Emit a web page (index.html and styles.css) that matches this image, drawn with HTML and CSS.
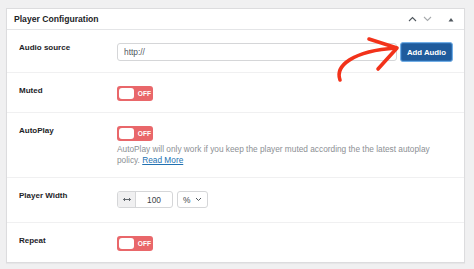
FILE: index.html
```html
<!DOCTYPE html>
<html lang="en">
<head>
    <meta charset="UTF-8">
    <meta name="viewport" content="width=device-width, initial-scale=1.0">
    <title>Player Configuration</title>
    <link rel="stylesheet" href="styles.css">
</head>
<body>
    <div class="panel">
        <!-- Panel header with move / toggle controls -->
        <div class="panel-head">
            <h2>Player Configuration</h2>
            <div class="head-tools">
                <svg width="9" height="6" viewBox="0 0 9 6"><path d="M1 5 L4.5 1.5 L8 5" fill="none" stroke="#50575e" stroke-width="1.1"/></svg>
                <svg width="9" height="6" viewBox="0 0 9 6"><path d="M1 1 L4.5 4.5 L8 1" fill="none" stroke="#a7aaad" stroke-width="1.1"/></svg>
                <svg class="caret" width="6" height="5" viewBox="0 0 6 5"><path d="M0.5 4.5 L3 1 L5.5 4.5 Z" fill="#50575e"/></svg>
            </div>
        </div>

        <div class="row">
            <div class="label">Audio source</div>
            <div class="field field-inline">
                <input type="text" class="text-input" placeholder="http://">
                <button class="btn-primary">Add Audio</button>
            </div>
        </div>

        <div class="row">
            <div class="label">Muted</div>
            <div class="field">
                <span class="switch"><span class="knob"></span><span class="switch-text">OFF</span></span>
            </div>
        </div>

        <div class="row">
            <div class="label">AutoPlay</div>
            <div class="field">
                <span class="switch"><span class="knob"></span><span class="switch-text">OFF</span></span>
                <p class="help">AutoPlay will only work if you keep the player muted according the the latest autoplay policy. <a href="#">Read More</a></p>
            </div>
        </div>

        <div class="row row-tall">
            <div class="label">Player Width</div>
            <div class="field field-inline">
                <div class="num-group">
                    <span class="addon">
                        <svg width="8" height="5" viewBox="0 0 8 5"><path d="M0.5 2.5 H7.5 M0.5 2.5 L2 1 M0.5 2.5 L2 4 M7.5 2.5 L6 1 M7.5 2.5 L6 4" fill="none" stroke="#50575e" stroke-width="0.9"/></svg>
                    </span>
                    <span class="num">100</span>
                </div>
                <div class="unit-select">
                    <span>%</span>
                    <svg width="7" height="5" viewBox="0 0 7 5"><path d="M1 1 L3.5 3.5 L6 1" fill="none" stroke="#50575e" stroke-width="1"/></svg>
                </div>
            </div>
        </div>

        <div class="row">
            <div class="label">Repeat</div>
            <div class="field">
                <span class="switch"><span class="knob"></span><span class="switch-text">OFF</span></span>
            </div>
        </div>
    </div>

    <!-- hand drawn pointer over the button -->
    <svg class="pointer" width="474" height="269" viewBox="0 0 474 269">
        <path d="M340 80 C335 66 352 51 396 48" fill="none" stroke="#f2321a" stroke-width="3.6" stroke-linecap="round"/>
        <path d="M369 39 L397 48 L378 69" fill="none" stroke="#f2321a" stroke-width="3.6" stroke-linecap="round" stroke-linejoin="round"/>
    </svg>
</body>
</html>
```

FILE: styles.css
```css
/* Page */
body {
    margin: 0;
    padding: 8px 9px 7px 6px;
    background-color: #f0f0f1;
    font-family: "Liberation Sans", Arial, sans-serif;
    color: #1d2327;
}

/* Settings panel */
.panel {
    background-color: #fff;
    border: 1px solid #dcdcde;
    box-shadow: 0 1px 1px rgba(0, 0, 0, 0.04);
}

.panel-head {
    display: flex;
    align-items: center;
    justify-content: space-between;
    height: 20px;
    padding: 0 10px 0 7px;
    border-bottom: 1px solid #e4e5e7;
}

.panel-head h2 {
    margin: 0;
    font-size: 8.6px;
    font-weight: bold;
}

.head-tools {
    display: flex;
    align-items: center;
    gap: 6px;
}

.head-tools .caret {
    margin-left: 10px;
}

/* Rows */
.row {
    display: flex;
    padding: 13px 0 11px;
    border-bottom: 1px solid #f0f0f1;
}

.row:last-child {
    border-bottom: none;
}

.row-tall {
    padding-bottom: 14px;
}

.label {
    width: 110px;
    flex-shrink: 0;
    padding-left: 12px;
    box-sizing: border-box;
    font-size: 8px;
    font-weight: bold;
    line-height: 10px;
    color: #1d2327;
}

.field {
    flex: 1;
    padding-right: 11px;
}

.field-inline {
    display: flex;
    align-items: flex-start;
    gap: 3px;
}

/* Text input + button */
.text-input {
    flex: 1;
    height: 18px;
    margin: 0;
    padding: 0 6px;
    border: 1px solid #d5d6d8;
    border-radius: 3px;
    box-sizing: border-box;
    font-family: inherit;
    font-size: 8.4px;
    color: #50575e;
}

.text-input::placeholder {
    color: #50575e;
}

.btn-primary {
    height: 20px;
    margin: -1px 0;
    padding: 0 6px;
    border: 1px solid #72aee6;
    border-radius: 3px;
    box-shadow: 0 0 0 1px #2b6cb0 inset;
    background-color: #1f5b9c;
    color: #fff;
    font-family: inherit;
    font-size: 7.8px;
    font-weight: bold;
}

/* OFF switch */
.switch {
    display: flex;
    align-items: center;
    width: 36px;
    height: 15px;
    padding: 0 2px;
    box-sizing: border-box;
    border-radius: 3px;
    background-color: #e9676a;
}

.knob {
    width: 15px;
    height: 11px;
    border-radius: 3px;
    background-color: #fff;
}

.switch-text {
    margin-left: 4px;
    font-size: 6.6px;
    font-weight: bold;
    color: #fff;
}

.help {
    max-width: 322px;
    margin: 3px 0 0;
    font-size: 8.3px;
    line-height: 11px;
    color: #8c8f94;
}

.help a {
    color: #2271b1;
}

/* Width input group */
.num-group {
    display: flex;
    width: 56px;
    height: 17px;
    border: 1px solid #d5d6d8;
    border-radius: 3px;
    box-sizing: border-box;
    overflow: hidden;
}

.addon {
    display: flex;
    align-items: center;
    justify-content: center;
    width: 17px;
    background-color: #f0f0f1;
    border-right: 1px solid #d5d6d8;
}

.num {
    flex: 1;
    display: flex;
    align-items: center;
    justify-content: center;
    font-size: 8.4px;
    color: #3c434a;
}

.unit-select {
    display: flex;
    align-items: center;
    gap: 5px;
    height: 17px;
    padding: 0 5px;
    margin-left: 1px;
    border: 1px solid #d5d6d8;
    border-radius: 3px;
    box-sizing: border-box;
    font-size: 8.4px;
    color: #3c434a;
}

/* Red arrow overlay */
.pointer {
    position: absolute;
    top: 0;
    left: 0;
    pointer-events: none;
}
```
